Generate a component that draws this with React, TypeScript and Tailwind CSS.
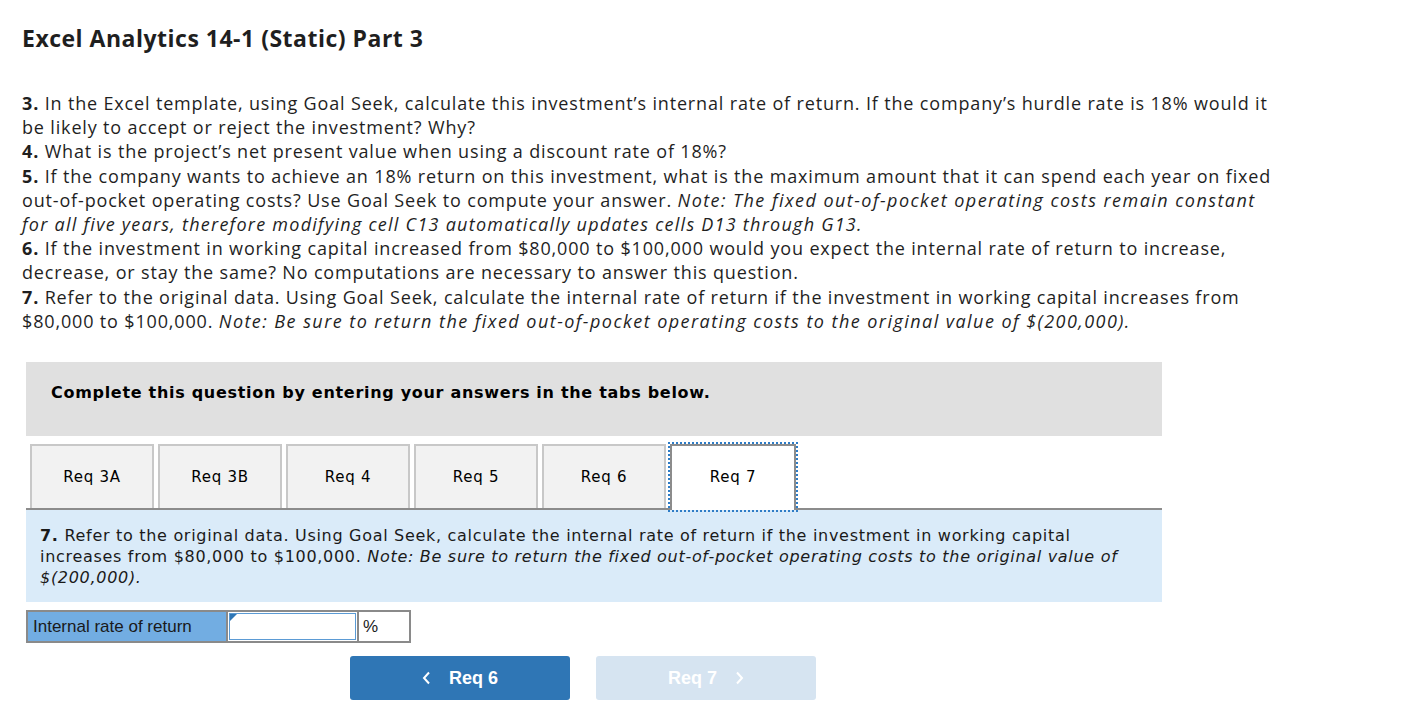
import React from 'react';

const tabs = ['Req 3A', 'Req 3B', 'Req 4', 'Req 5', 'Req 6', 'Req 7'];

const Note: React.FC<{ children: React.ReactNode }> = ({ children }) => (
    <i className="tracking-[1.45px]">{children}</i>
);

const App: React.FC = () => {
    return (
        <div className="bg-white min-h-[706px] w-[1410px] text-[#1a1a1a]">
            <div className="pl-[22px] pt-[22px]">
                <h1 className="font-['Open_Sans',sans-serif] font-bold text-[23px] tracking-[0.5px] leading-[32px] text-[#1f1f1f]">
                    Excel Analytics 14-1 (Static) Part 3
                </h1>

                <div className="mt-[37px] whitespace-nowrap font-['Open_Sans',sans-serif] text-[18px] tracking-[0.84px] leading-[24.2px] text-[#1f1f1f]">
                    <p>
                        <b>3.</b> In the Excel template, using Goal Seek, calculate this investment’s internal rate of return. If the company’s hurdle rate is 18% would it<br />
                        be likely to accept or reject the investment? Why?
                    </p>
                    <p><b>4.</b> What is the project’s net present value when using a discount rate of 18%?</p>
                    <p>
                        <b>5.</b> If the company wants to achieve an 18% return on this investment, what is the maximum amount that it can spend each year on fixed<br />
                        out-of-pocket operating costs? Use Goal Seek to compute your answer. <Note>Note: The fixed out-of-pocket operating costs remain constant<br />
                        <span className="tracking-[1.25px]">for all five years, therefore modifying cell C13 automatically updates cells D13 through G13.</span></Note>
                    </p>
                    <p>
                        <b>6.</b> If the investment in working capital increased from $80,000 to $100,000 would you expect the internal rate of return to increase,<br />
                        decrease, or stay the same? No computations are necessary to answer this question.
                    </p>
                    <p>
                        <b>7.</b> Refer to the original data. Using Goal Seek, calculate the internal rate of return if the investment in working capital increases from<br />
                        $80,000 to $100,000. <Note>Note: Be sure to return the fixed out-of-pocket operating costs to the original value of $(200,000).</Note>
                    </p>
                </div>
            </div>

            <div className="ml-[26px] mt-[29px] w-[1136px]">
                <div className="bg-[#e0e0e0] h-[74px] pl-[25px] pt-[21px]">
                    <p className="font-['DejaVu_Sans',sans-serif] font-bold text-[16px] leading-[20px] tracking-[0.7px] text-black">
                        Complete this question by entering your answers in the tabs below.
                    </p>
                </div>

                <div className="mt-[8px] flex gap-[4px] pl-[4px] border-b-2 border-[#8c8c8c]">
                    {tabs.map((t, i) => {
                        const active = i === tabs.length - 1;
                        return (
                            <div
                                key={t}
                                className={
                                    active
                                        ? 'w-[126px] h-[66px] mb-[-2px] bg-white border-2 border-b-0 border-[#8c8c8c] outline-2 outline-dotted outline-offset-0 outline-[#2e7cc6] flex items-center justify-center pb-[2px] font-["DejaVu_Sans",sans-serif] text-[15px] tracking-[0.7px] text-black'
                                        : 'w-[124px] h-[64px] bg-[#f2f2f2] border-2 border-b-0 border-[#c8c8c8] flex items-center justify-center font-["DejaVu_Sans",sans-serif] text-[15px] tracking-[0.7px] text-black'
                                }
                            >
                                {t}
                            </div>
                        );
                    })}
                </div>

                <div className="bg-[#daebf9] px-[14px] pt-[15px] pb-[14px] font-['DejaVu_Sans',sans-serif] text-[16px] tracking-[0.7px] leading-[21px] text-[#1a1a1a]">
                    <p className="w-[1100px]"><b>7.</b> Refer to the original data. Using Goal Seek, calculate the internal rate of return if the investment in working capital increases from $80,000 to $100,000. <i>Note: Be sure to return the fixed out-of-pocket operating costs to the original value of $(200,000).</i></p>
                </div>

                <div className="mt-[8px] flex h-[33px] w-[385px] font-['Liberation_Sans',sans-serif] text-[17px]">
                    <div className="w-[200px] bg-[#72ade2] border-2 border-[#8a8a8a] border-r-0 flex items-center pl-[5px] text-[#1a1a1a]">
                        Internal rate of return
                    </div>
                    <div className="relative w-[133px] bg-white border-2 border-[#8a8a8a] p-[1px]">
                        <div className="h-full w-full border border-[#5b9bd5]"></div>
                        <svg className="absolute left-[2px] top-[2px]" width="8" height="8" viewBox="0 0 8 8">
                            <path d="M0 0 L7 0 L0 7 Z" fill="#2f76b5" />
                        </svg>
                    </div>
                    <div className="w-[52px] bg-white border-2 border-l-0 border-[#8a8a8a] flex items-center pl-[4px] text-[#1a1a1a]">
                        %
                    </div>
                </div>

                <div className="mt-[13px] flex gap-[26px] pl-[324px]">
                    <button className="w-[220px] h-[44px] rounded-[3px] bg-[#2f76b5] text-white font-['Liberation_Sans',sans-serif] font-bold text-[18px] flex items-center justify-center gap-[18px]">
                        <svg width="9" height="14" viewBox="0 0 9 14"><path d="M7 1.5 L2 7 L7 12.5" stroke="white" strokeWidth="2" fill="none" /></svg>
                        <span>Req 6</span>
                    </button>
                    <button className="w-[220px] h-[44px] rounded-[3px] bg-[#d6e4f1] text-white font-['Liberation_Sans',sans-serif] font-bold text-[18px] flex items-center justify-center gap-[18px]">
                        <span>Req 7</span>
                        <svg width="9" height="14" viewBox="0 0 9 14"><path d="M2 1.5 L7 7 L2 12.5" stroke="white" strokeWidth="2" fill="none" /></svg>
                    </button>
                </div>
            </div>
        </div>
    );
};

export default App;
